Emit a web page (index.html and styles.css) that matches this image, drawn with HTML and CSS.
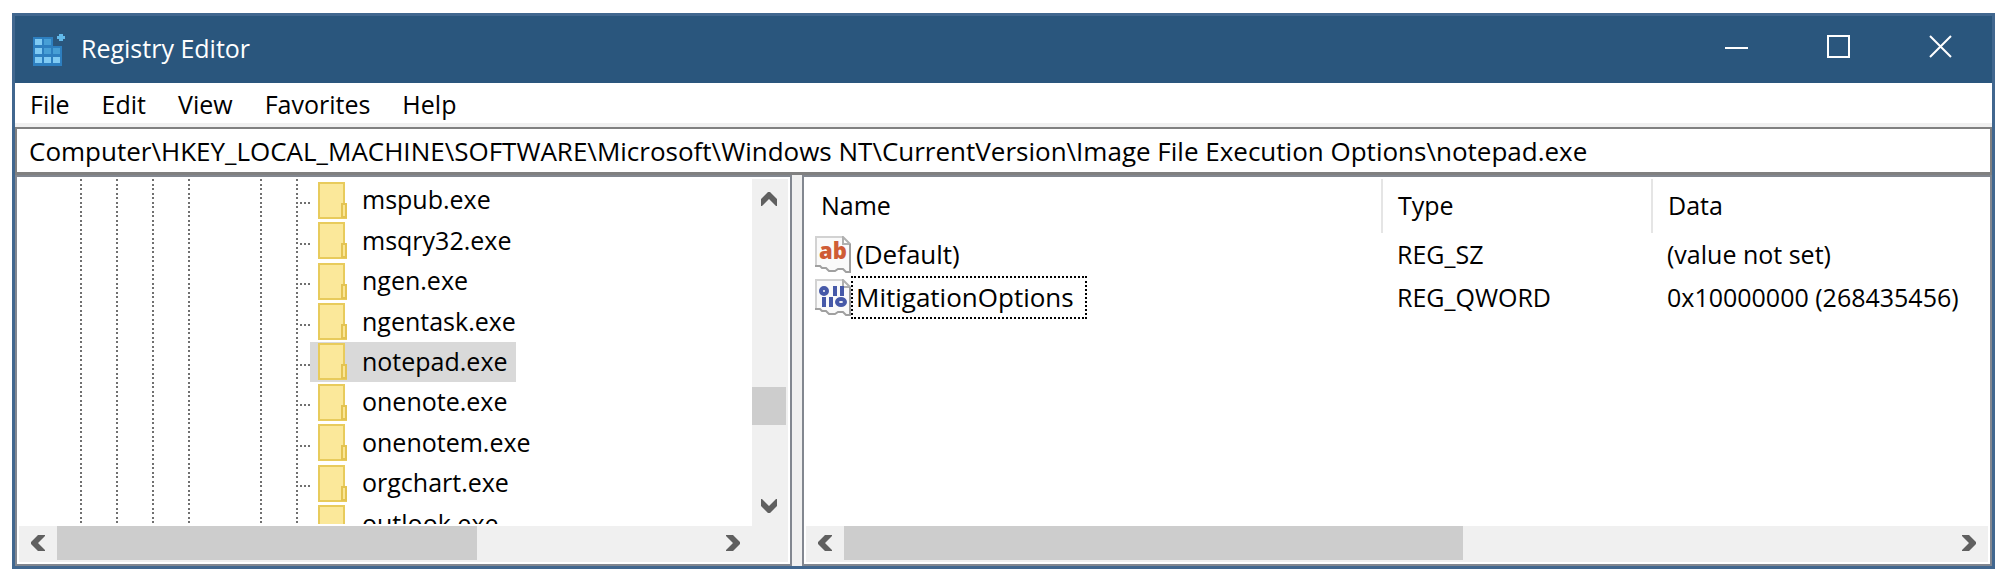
FILE: index.html
```html
<!DOCTYPE html>
<html lang="en">
<head>
  <meta charset="UTF-8">
  <title>Registry Editor</title>
  <link rel="stylesheet" href="styles.css">
</head>
<body>
  <!-- shared icons -->
  <svg class="defs" width="0" height="0" aria-hidden="true">
    <symbol id="folder" viewBox="0 0 30 37">
      <path d="M1 1H26V22H28V36H1Z" fill="#fbe89a" stroke="#e8cb5c" stroke-width="2"/>
      <path d="M24 35V22H28V35Z" fill="#fbe693" stroke="#e3c352" stroke-width="2"/>
    </symbol>
    <symbol id="arrow-left" viewBox="0 0 14 16">
      <path d="M7 0H14V1L7 8L14 15V16H7L0 9V7Z" fill="#606060"/>
    </symbol>
    <symbol id="arrow-right" viewBox="0 0 14 16">
      <path d="M7 0H0V1L7 8L0 15V16H7L14 9V7Z" fill="#606060"/>
    </symbol>
    <symbol id="arrow-up" viewBox="0 0 16 14">
      <path d="M0 7L7 0H9L16 7V14H15L8 7L1 14H0Z" fill="#606060"/>
    </symbol>
    <symbol id="arrow-down" viewBox="0 0 16 14">
      <path d="M0 7L7 14H9L16 7V0H15L8 7L1 0H0Z" fill="#606060"/>
    </symbol>
    <symbol id="page" viewBox="0 0 36 37">
      <path d="M1 1H28L35 8V36H31L28 33H23L20 35H14L11 32H7L5 30H1Z" fill="#fafafa"/>
      <path d="M1 30V1H28" fill="none" stroke="#d2d2d2" stroke-width="2"/>
      <path d="M28 1V8H35Z" fill="#fff" stroke="#b0b0b0" stroke-width="2"/>
      <path d="M35 8V36H31L28 33H23L20 35H14L11 32H7L5 30H0" fill="none" stroke="#a0a0a0" stroke-width="2"/>
    </symbol>
  </svg>

  <div class="window">
    <header class="titlebar">
      <svg class="app-icon" width="34" height="34" viewBox="0 0 34 34" aria-hidden="true">
        <path d="M0 4H20V13H29V33H0Z" fill="#2d7fc0"/>
        <path d="M2 6H9V12H2ZM2 15H9V21H2ZM2 24H9V30H2ZM11 24H18V30H11ZM20 24H27V30H20Z" fill="#7fcaf3"/>
        <path d="M11 6H18V12H11ZM11 15H18V21H11ZM20 15H27V21H20Z" fill="#479fd6"/>
        <path d="M26 1H30V3H32V6H30V8H26V6H24V3H26Z" fill="#62b9ea"/>
      </svg>
      <h1>Registry Editor</h1>
      <div class="controls">
        <button type="button" aria-label="Minimize">
          <svg width="24" height="24" viewBox="0 0 24 24"><path d="M0 13H23" stroke="#fff" stroke-width="2"/></svg>
        </button>
        <button type="button" aria-label="Maximize">
          <svg width="24" height="24" viewBox="0 0 24 24"><path d="M1 1H22V22H1Z" fill="none" stroke="#fff" stroke-width="2"/></svg>
        </button>
        <button type="button" aria-label="Close">
          <svg width="24" height="24" viewBox="0 0 24 24"><path d="M1 1L22 22M22 1L1 22" stroke="#fff" stroke-width="2"/></svg>
        </button>
      </div>
    </header>

    <nav class="menu">
      <button type="button">File</button>
      <button type="button">Edit</button>
      <button type="button">View</button>
      <button type="button">Favorites</button>
      <button type="button">Help</button>
    </nav>

    <input class="address" type="text" aria-label="Address" value="Computer\HKEY_LOCAL_MACHINE\SOFTWARE\Microsoft\Windows NT\CurrentVersion\Image File Execution Options\notepad.exe">

    <main class="panes">
      <section class="pane tree-pane">
        <div class="tree-view">
          <div class="guides"><i></i><i></i><i></i><i></i><i class="none"></i><i></i><i></i></div>
          <ul class="tree">
            <li><svg class="folder"><use href="#folder"/></svg><span>mspub.exe</span></li>
            <li><svg class="folder"><use href="#folder"/></svg><span>msqry32.exe</span></li>
            <li><svg class="folder"><use href="#folder"/></svg><span>ngen.exe</span></li>
            <li><svg class="folder"><use href="#folder"/></svg><span>ngentask.exe</span></li>
            <li class="selected"><svg class="folder"><use href="#folder"/></svg><span>notepad.exe</span></li>
            <li><svg class="folder"><use href="#folder"/></svg><span>onenote.exe</span></li>
            <li><svg class="folder"><use href="#folder"/></svg><span>onenotem.exe</span></li>
            <li><svg class="folder"><use href="#folder"/></svg><span>orgchart.exe</span></li>
            <li><svg class="folder"><use href="#folder"/></svg><span>outlook.exe</span></li>
          </ul>
        </div>
        <div class="scroll vertical">
          <button type="button" aria-label="Scroll up"><svg width="16" height="14"><use href="#arrow-up"/></svg></button>
          <div class="track"><div class="thumb"></div></div>
          <button type="button" aria-label="Scroll down"><svg width="16" height="14"><use href="#arrow-down"/></svg></button>
        </div>
        <div class="scroll horizontal">
          <button type="button" aria-label="Scroll left"><svg width="14" height="16"><use href="#arrow-left"/></svg></button>
          <div class="track"><div class="thumb"></div></div>
          <button type="button" aria-label="Scroll right"><svg width="14" height="16"><use href="#arrow-right"/></svg></button>
        </div>
        <div class="corner"></div>
      </section>

      <section class="pane list-pane">
        <div class="list-view">
          <table>
            <thead>
              <tr><th class="col-name">Name</th><th class="col-type">Type</th><th>Data</th></tr>
            </thead>
            <tbody>
              <tr>
                <td>
                  <div class="value">
                    <svg width="36" height="37" viewBox="0 0 36 37" aria-hidden="true">
                      <use href="#page"/>
                      <text class="glyph" x="4" y="23">ab</text>
                    </svg>
                    <span>(Default)</span>
                  </div>
                </td>
                <td>REG_SZ</td>
                <td>(value not set)</td>
              </tr>
              <tr>
                <td>
                  <div class="value">
                    <svg width="36" height="37" viewBox="0 0 36 37" aria-hidden="true">
                      <use href="#page"/>
                      <g fill="none" stroke="#4659a8" stroke-width="4">
                        <ellipse cx="9" cy="12" rx="3" ry="3"/>
                        <path d="M20 7V17M27 7V17M9 18V28M16 18V28"/>
                        <ellipse cx="26" cy="23" rx="4" ry="3"/>
                      </g>
                    </svg>
                    <span class="focused">MitigationOptions</span>
                  </div>
                </td>
                <td>REG_QWORD</td>
                <td>0x10000000 (268435456)</td>
              </tr>
            </tbody>
          </table>
        </div>
        <div class="scroll horizontal">
          <button type="button" aria-label="Scroll left"><svg width="14" height="16"><use href="#arrow-left"/></svg></button>
          <div class="track"><div class="thumb"></div></div>
          <button type="button" aria-label="Scroll right"><svg width="14" height="16"><use href="#arrow-right"/></svg></button>
        </div>
      </section>
    </main>
  </div>
</body>
</html>
```
FILE: styles.css
```css
* {
  box-sizing: border-box;
}

body {
  display: flex;
  height: 100vh;
  margin: 0;
  padding: 13px 13px 15px 12px;
  background: #fff;
  color: #000;
  font-family: "Open Sans", "Noto Sans", sans-serif;
  font-size: 26px;
  line-height: 36px;
}

button {
  display: flex;
  align-items: center;
  justify-content: center;
  padding: 0;
  border: none;
  background: none;
  color: inherit;
  font: inherit;
}

.defs {
  position: absolute;
}

.window {
  display: flex;
  flex-direction: column;
  flex: 1;
  min-width: 0;
  border: 3px solid #41678f;
  background: #f0f0f0;
}

/* title bar */
.titlebar {
  display: flex;
  align-items: center;
  height: 67px;
  padding-left: 18px;
  background: #2a567d;
  color: #fff;
}

.titlebar h1 {
  flex: 1;
  margin: 0 0 0 14px;
  padding-bottom: 4px;
  font-size: 25px;
  font-weight: normal;
}

.controls {
  display: flex;
  align-self: stretch;
}

.controls button {
  width: 102px;
  padding-bottom: 6px;
}

/* menu */
.menu {
  display: flex;
  gap: 32px;
  height: 40px;
  padding: 2px 0 0 15px;
  background: #fff;
  font-size: 25px;
}

.address {
  height: 48px;
  margin-top: 4px;
  padding: 0 0 0 12px;
  border: 2px solid #808080;
  border-bottom-width: 3px;
  outline: none;
  background: #fff;
  color: inherit;
  font: inherit;
}

/* panes */
.panes {
  display: flex;
  flex: 1;
  gap: 10px;
  min-height: 0;
}

.pane {
  display: grid;
  padding: 2px;
  border: 2px solid #828790;
  background: #fff;
}

.tree-pane {
  grid-template: minmax(0, 1fr) 36px / 1fr 36px;
  width: 777px;
}

.list-pane {
  grid-template: minmax(0, 1fr) 36px / 1fr;
  flex: 1;
  min-width: 0;
}

.tree-view {
  display: flex;
  margin-bottom: 2px;
  overflow: hidden;
}

.guides {
  display: flex;
  gap: 34px;
  padding-left: 61px;
}

.guides i {
  width: 2px;
  background: repeating-linear-gradient(#707070 0 2px, transparent 2px 5px, #707070 5px 7px, transparent 7px 9px);
}

.guides .none {
  background: none;
}

.tree {
  display: grid;
  grid-auto-rows: 1fr;
  height: 364px;
  margin: 1px 0 0;
  padding: 0;
  font-size: 25px;
  list-style: none;
}

.tree li {
  display: flex;
  align-items: center;
  justify-self: start;
  margin-left: 12px;
  padding: 0 8px;
}

.tree span {
  padding-bottom: 2px;
}

/* dotted branch from the guide line to the folder */
.tree li::before {
  content: "";
  width: 12px;
  height: 2px;
  margin: 6px 0 0 -18px;
  background: repeating-linear-gradient(90deg, #707070 0 2px, transparent 2px 4px);
}

.tree .selected {
  background: #d9d9d9;
}

.folder {
  width: 30px;
  height: 37px;
  margin: 0 14px 0 6px;
}

/* scroll bars */
.scroll {
  display: flex;
  background: #f0f0f0;
}

.scroll button {
  flex: none;
  width: 38px;
  height: 34px;
}

.track {
  display: flex;
  flex: 1;
}

.thumb {
  background: #cdcdcd;
}

.horizontal .thumb {
  height: 34px;
  width: 64%;
}

.list-pane .thumb {
  width: 56%;
}

.vertical {
  flex-direction: column;
}

.vertical button {
  width: 34px;
  height: 40px;
}

.vertical .track {
  display: grid;
  grid-template-rows: 11fr 38px 4fr;
}

.vertical .thumb {
  grid-row: 2;
  width: 34px;
}

.corner {
  background: #f0f0f0;
}

/* value list */
.list-view {
  overflow: hidden;
}

table {
  width: 100%;
  border-collapse: collapse;
  table-layout: fixed;
}

th,
td {
  height: 43px;
  padding: 0 0 2px 15px;
  font-size: 25px;
  font-weight: normal;
  text-align: left;
  white-space: nowrap;
}

th {
  height: 54px;
}

th + th {
  border-left: 2px solid #e5e5e5;
}

.col-name {
  width: 576px;
}

.col-type {
  width: 270px;
}

td:first-child {
  padding: 0 0 0 9px;
  font-size: 26px;
}

.value {
  display: flex;
  align-items: center;
}

.value span {
  height: 43px;
  padding: 1px 11px 0 3px;
  border: 2px solid transparent;
}

.value .focused {
  border: 2px dotted #000;
}

.glyph {
  fill: #cf5c36;
  font-family: "Open Sans", sans-serif;
  font-size: 22px;
  font-weight: 800;
}
```
